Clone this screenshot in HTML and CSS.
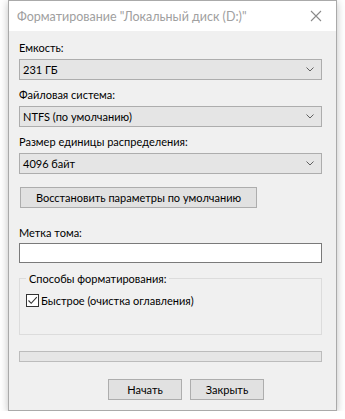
FILE: index.html
```html
<!DOCTYPE html>
<html lang="ru">
  <head>
    <meta charset="UTF-8" />
    <meta name="viewport" content="width=device-width, initial-scale=1.0" />
    <link rel="stylesheet" href="styles.css">
    <title>Форматирование</title>
  </head>
  <body>
    <div class="window">
      <div class="titlebar">
        <span class="title">Форматирование "Локальный диск (D:)"</span>
        <svg class="close" width="12" height="12" viewBox="0 0 12 12">
          <path d="M1 1 L11 11 M11 1 L1 11" stroke="#8a8a8a" stroke-width="1.1" fill="none"/>
        </svg>
      </div>
      <div class="content">
        <div class="label first">Емкость:</div>
        <div class="combo">
          <span>231 ГБ</span>
          <svg class="arrow" width="8" height="5" viewBox="0 0 8 5"><path d="M0.5 0.5 L4 4 L7.5 0.5" stroke="#606060" fill="none"/></svg>
        </div>

        <div class="label">Файловая система:</div>
        <div class="combo">
          <span>NTFS (по умолчанию)</span>
          <svg class="arrow" width="8" height="5" viewBox="0 0 8 5"><path d="M0.5 0.5 L4 4 L7.5 0.5" stroke="#606060" fill="none"/></svg>
        </div>

        <div class="label">Размер единицы распределения:</div>
        <div class="combo">
          <span>4096 байт</span>
          <svg class="arrow" width="8" height="5" viewBox="0 0 8 5"><path d="M0.5 0.5 L4 4 L7.5 0.5" stroke="#606060" fill="none"/></svg>
        </div>

        <button class="btn restore">Восстановить параметры по умолчанию</button>

        <div class="label volume">Метка тома:</div>
        <div class="textbox"></div>

        <fieldset class="group">
          <legend>Способы форматирования:</legend>
          <label class="check">
            <span class="box">
              <svg width="11" height="11" viewBox="0 0 11 11"><path d="M1.5 5.5 L4.2 8.3 L9.8 2.2" stroke="#333" stroke-width="1.1" fill="none"/></svg>
            </span>
            Быстрое (очистка оглавления)
          </label>
        </fieldset>

        <div class="progress"></div>

        <div class="actions">
          <button class="btn">Начать</button>
          <button class="btn">Закрыть</button>
        </div>
      </div>
    </div>
  </body>
</html>
```

FILE: styles.css
```css
body {
    margin: 0;
    background: #ffffff;
    font-family: Lato, "Noto Sans", sans-serif;
    font-size: 11px;
    color: #000;
}
.window {
    margin-left: 8px;
    width: 327px;
    border: 1px solid #aaaaaa;
    background: #f0f0f0;
    box-shadow: 0 2px 8px rgba(0, 0, 0, 0.25);
}
.titlebar {
    height: 30px;
    background: #ffffff;
    display: flex;
    align-items: center;
    justify-content: space-between;
    padding: 0 14px 0 8px;
}
.title {
    color: #a0a0a0;
    font-size: 12.5px;
}
.close {
    display: block;
}
.content {
    padding: 0 14px 10px 10px;
}
.label {
    line-height: 15px;
    margin-top: 0;
    margin-bottom: 4px;
}
.label.first {
    margin-top: 9px;
}
.combo {
    height: 21px;
    box-sizing: border-box;
    border: 1px solid #adadad;
    background: #e5e5e5;
    display: flex;
    align-items: center;
    justify-content: space-between;
    padding: 0 7px 0 3px;
    margin-bottom: 7px;
}
.arrow {
    display: block;
}
.btn {
    font-family: inherit;
    font-size: 11px;
    height: 21px;
    box-sizing: border-box;
    border: 1px solid #adadad;
    background: #e1e1e1;
    color: #000;
    padding: 0;
}
.restore {
    display: block;
    width: 237px;
    margin-left: 1px;
    margin-top: 13px;
}
.label.volume {
    margin-top: 17px;
    margin-bottom: 3px;
}
.textbox {
    height: 20px;
    box-sizing: border-box;
    border: 1px solid #7a7a7a;
    background: #ffffff;
}
.group {
    margin: 8px 0 0 0;
    padding: 0 6px 0 6px;
    height: 64px;
    box-sizing: border-box;
    border: 1px solid #dcdcdc;
}
.group legend {
    padding: 0 3px;
    line-height: 15px;
}
.check {
    display: flex;
    align-items: center;
    gap: 2px;
    margin-top: 7px;
    line-height: 15px;
}
.box {
    width: 13px;
    height: 13px;
    box-sizing: border-box;
    border: 1px solid #333;
    background: #ffffff;
    display: flex;
    align-items: center;
    justify-content: center;
}
.box svg {
    display: block;
}
.progress {
    margin-top: 16px;
    height: 11px;
    box-sizing: border-box;
    border: 1px solid #bcbcbc;
    background: #e6e6e6;
}
.actions {
    display: flex;
    gap: 8px;
    margin-top: 17px;
    padding-left: 89px;
}
.actions .btn {
    width: 74px;
}
```
